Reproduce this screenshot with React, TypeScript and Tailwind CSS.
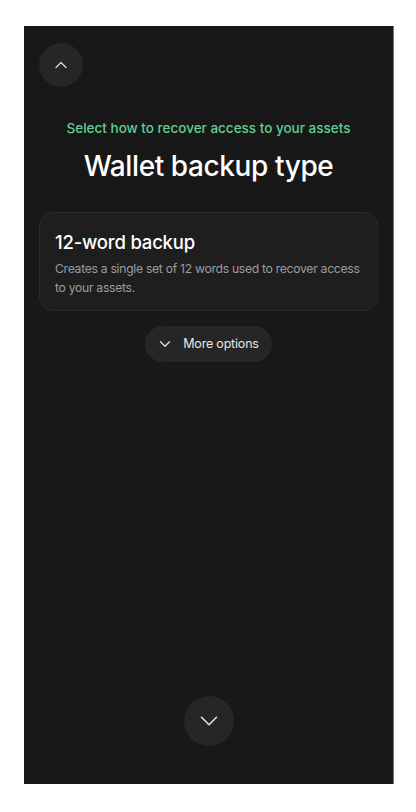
import { ChevronUp, ChevronDown } from 'lucide-react';

export default function App() {
  return (
    <div className="min-h-[812px] w-[416px] bg-white pl-[24px] pt-[26px] font-['Inter',sans-serif]">
      <div className="relative flex h-[758px] w-[370px] flex-col border-r border-[#7a7a7a] bg-[#181818] px-[15px]">
        {/* Back */}
        <button className="mt-[17px] flex h-[44px] w-[44px] items-center justify-center rounded-full bg-[#262626] text-[#d8d8d8]">
          <ChevronUp className="h-[20px] w-[20px]" strokeWidth={1.6} />
        </button>

        {/* Heading */}
        <p className="mt-[32px] text-center text-[13.5px] font-medium leading-[18px] text-[#5fd08e]">
          Select how to recover access to your assets
        </p>
        <h1 className="mt-[12px] text-center text-[28px] font-medium leading-[34px] tracking-[-0.4px] text-white">
          Wallet backup type
        </h1>

        {/* Option card */}
        <div className="mt-[29px] rounded-[14px] border border-[#2a2a2a] bg-[#1e1e1e] pl-[15px] pr-[6px] pb-[13px] pt-[17px]">
          <h2 className="text-[18.5px] font-medium leading-[24px] tracking-[-0.2px] text-white">12-word backup</h2>
          <p className="mt-[5px] text-[12.2px] leading-[19px] tracking-[-0.3px] text-[#9c9c9c]">
            Creates a single set of 12 words used to recover access to your assets.
          </p>
        </div>

        <div className="mt-[15px] flex justify-center">
          <button className="flex h-[36px] items-center gap-[9px] rounded-full bg-[#262626] pl-[11px] pr-[13px] text-[12.5px] tracking-[-0.2px] text-[#e6e6e6]">
            <ChevronDown className="h-[18px] w-[18px]" strokeWidth={1.6} />
            More options
          </button>
        </div>

        <div className="mt-auto mb-[38px] flex justify-center">
          <button className="flex h-[50px] w-[50px] items-center justify-center rounded-full bg-[#262626] text-[#e0e0e0]">
            <ChevronDown className="h-[30px] w-[30px]" strokeWidth={1.3} />
          </button>
        </div>
      </div>
    </div>
  );
}
